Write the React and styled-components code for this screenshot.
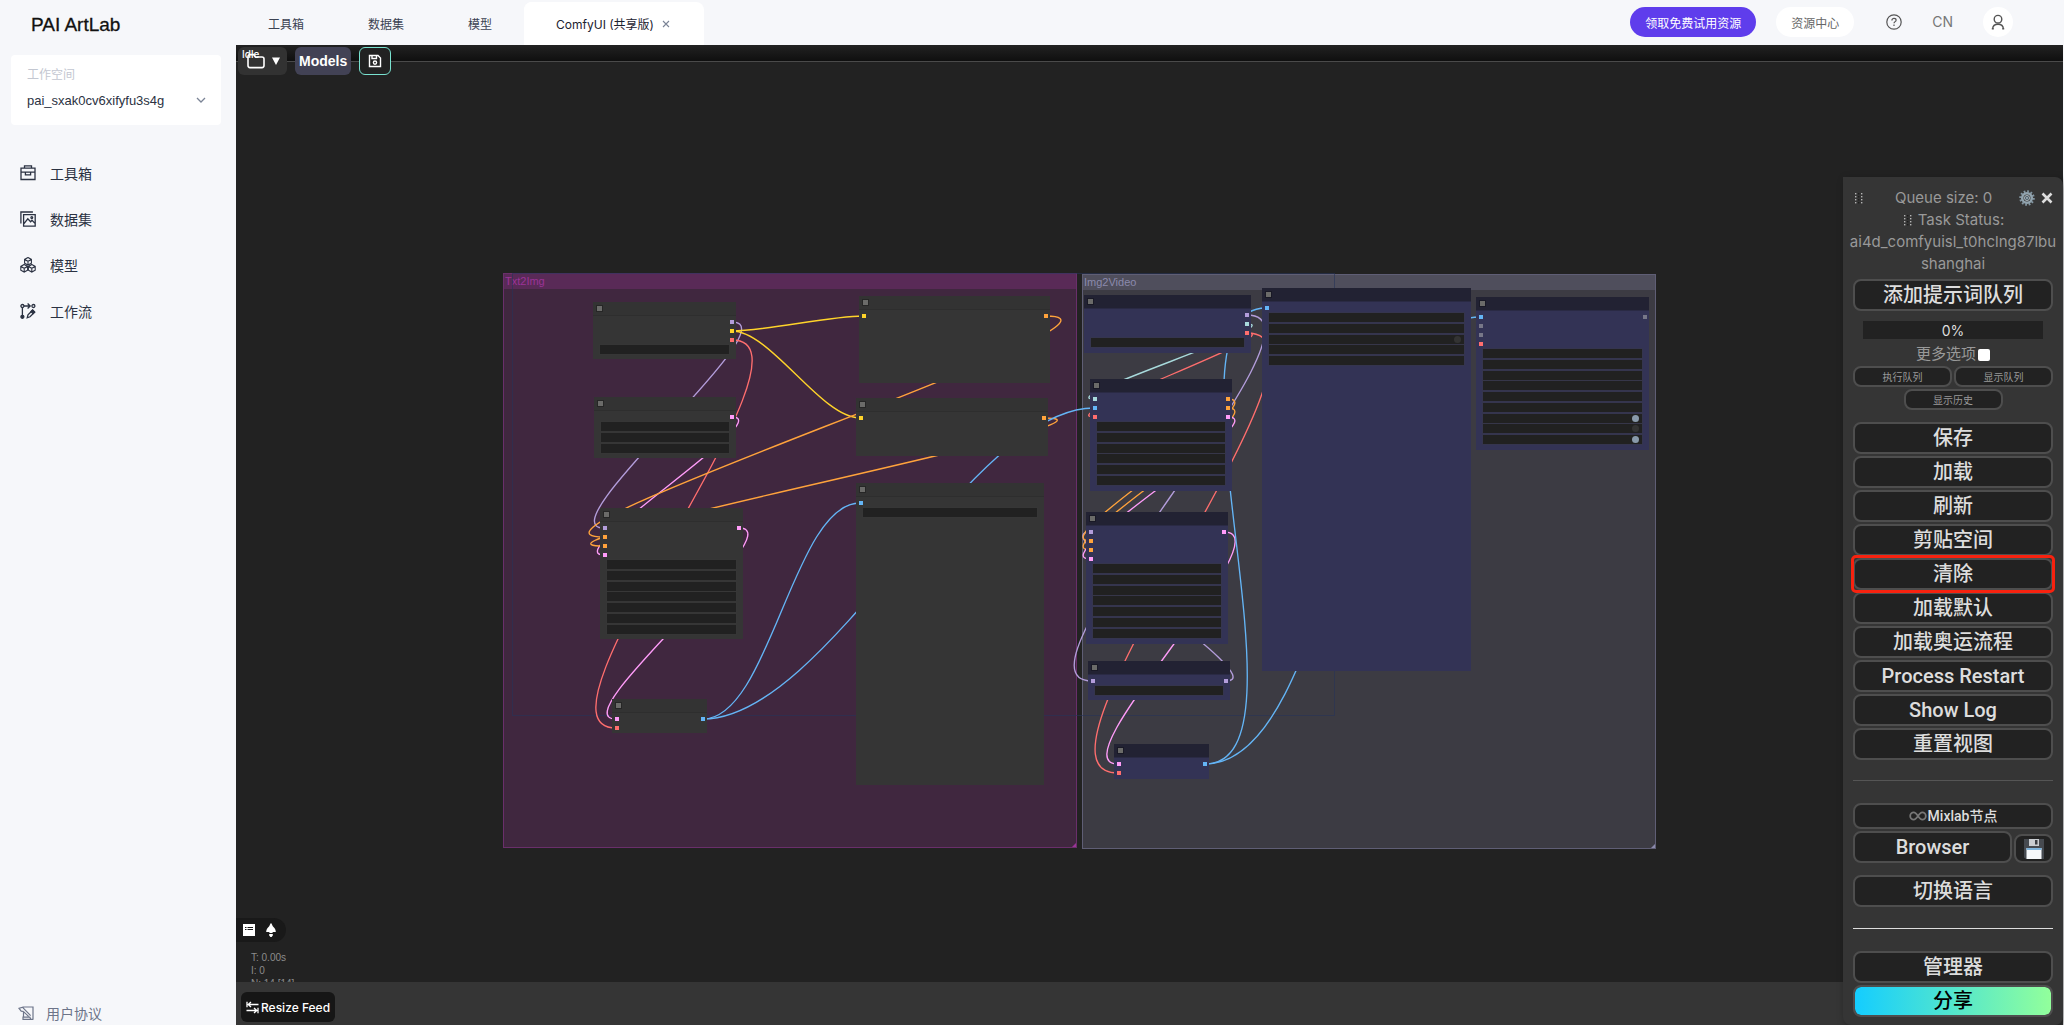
import React from 'react';
import styled, { createGlobalStyle, css } from 'styled-components';

const sans = '"Liberation Sans", "Noto Sans CJK SC", sans-serif';
const ui = 'Inter, "Noto Sans CJK SC", sans-serif';
const menuFont = 'Roboto, "Noto Sans CJK SC", sans-serif';

const GlobalStyle = createGlobalStyle`
  * { box-sizing: border-box; }
  body { margin: 0; background: #f6f8fa; font-family: ${ui}; }
  button, input, select { font-family: inherit; }
  button { cursor: pointer; }
  a { color: inherit; text-decoration: none; }
`;

/* ---------- page shell ---------- */

const Page = styled.div`
  display: grid;
  grid-template-columns: 236px minmax(0, 1fr);
  height: 100vh;
  overflow: hidden;
  background: #f6f7fa;
`;

const Sidebar = styled.aside`
  display: flex;
  flex-direction: column;
  padding: 0 15px 0 11px;
  color: #2b3242;
`;

const Logo = styled.a`
  padding-left: 20px;
  height: 55px;
  line-height: 50px;
  font-size: 19px;
  font-weight: 500;
  font-family: ${sans};
  color: #111;
  -webkit-text-stroke: 0.3px #111;
`;

const WorkspaceCard = styled.div`
  height: 70px;
  padding: 11px 15px 0 16px;
  border-radius: 4px;
  background: #fff;
`;

const WorkspaceLabel = styled.label`
  display: block;
  font-size: 12px;
  line-height: 18px;
  color: #c3c7d1;
`;

const SelectRow = styled.div`
  display: flex;
  align-items: center;
  margin-top: 5px;
  height: 22px;
`;

const WorkspaceSelect = styled.select`
  flex: 1;
  min-width: 0;
  padding: 0;
  border: 0;
  appearance: none;
  background: none;
  font-size: 13px;
  font-family: ${sans};
  color: #2b3242;
`;

const Nav = styled.nav`
  display: flex;
  flex-direction: column;
  margin-top: 25px;
`;

const NavLink = styled.a`
  display: flex;
  align-items: center;
  gap: 14px;
  height: 46px;
  padding-left: 9px;
  font-size: 14px;
`;

const Agreement = styled(NavLink)`
  margin-top: auto;
  height: 24px;
  padding-left: 7px;
  gap: 12px;
  color: #6c7489;
`;

const Main = styled.main`
  display: flex;
  flex-direction: column;
  min-width: 0;
  padding-right: 1px;
`;

/* ---------- header ---------- */

const Header = styled.header`
  display: flex;
  align-items: flex-end;
  justify-content: space-between;
  height: 45px;
  flex: none;
`;

const Tabs = styled.nav`
  display: flex;
`;

const Tab = styled.a`
  display: flex;
  align-items: center;
  gap: 10px;
  height: 43px;
  padding: 0 32px;
  font-size: 12px;
  color: ${p => (p.$active ? '#1c2230' : '#3b4252')};
  background: ${p => (p.$active ? '#fff' : 'transparent')};
  border-radius: 8px 8px 0 0;
`;

const TabGroup = styled.div`
  display: flex;
  align-items: center;
  background: #fff;
  border-radius: 8px 8px 0 0;
  padding-right: 34px;
  ${Tab} { padding-right: 8px; }
`;

const CloseTab = styled.button`
  display: flex;
  padding: 0;
  border: 0;
  background: none;
  color: #7b8496;
`;

const Actions = styled.div`
  display: flex;
  align-items: center;
  padding: 0 50px 8px 0;
`;

const Pill = styled.button`
  height: 30px;
  padding: 0 15px;
  border: 0;
  border-radius: 15px;
  font-size: 12px;
  margin-right: ${p => (p.$primary ? '20px' : '32px')};
  color: ${p => (p.$primary ? '#fff' : '#666')};
  background: ${p => (p.$primary ? '#5f3dec' : '#fff')};
`;

const PlainAction = styled.button`
  display: flex;
  padding: 0;
  margin-right: 30px;
  border: 0;
  background: none;
  font-size: 14px;
  line-height: 18px;
  color: #777;
`;

const Avatar = styled.button`
  display: grid;
  place-items: center;
  width: 30px;
  height: 30px;
  padding: 0;
  border: 0;
  border-radius: 50%;
  background: #fff;
  color: #555;
`;

/* ---------- stage ---------- */

const Stage = styled.div`
  position: relative;
  display: flex;
  flex-direction: column;
  flex: 1;
  min-height: 0;
  background: #222;
`;

const Canvas = styled.section`
  position: relative;
  flex: 1;
  overflow: hidden;
`;

const StatusBar = styled.div`
  position: absolute;
  inset: 0 0 auto 0;
  height: 17px;
  background: linear-gradient(#222, #0f0f0f);
  border-bottom: 1px solid #4a4a4a;
`;

const StatusText = styled.span`
  position: absolute;
  z-index: 2;
  left: 6px;
  top: 2px;
  font: 500 10px/14px ${ui};
  color: #fff;
`;

const Toolbar = styled.div`
  position: absolute;
  left: 2px;
  top: 2px;
  display: flex;
  gap: 8px;
`;

const toolPadding = { folder: '0 6px 0 8px', models: '0 3px', save: '0' };
const toolColor = { folder: '#323232', models: '#424255', save: '#222' };

const ToolButton = styled.button`
  display: flex;
  align-items: center;
  justify-content: center;
  gap: 7px;
  min-width: 32px;
  height: 28px;
  padding: ${p => toolPadding[p.$kind]};
  border: 1px solid ${p => (p.$kind === 'save' ? '#79e2d0' : 'transparent')};
  border-radius: 6px;
  background: ${p => toolColor[p.$kind]};
  color: #fff;
  font: bold 14px ${sans};
`;

const QuickPill = styled.div`
  position: absolute;
  left: 0;
  bottom: 40px;
  display: flex;
  align-items: center;
  gap: 9px;
  width: 50px;
  height: 24px;
  padding-left: 7px;
  border-radius: 0 12px 12px 0;
  background: #191919;
`;

const QuickButton = styled.button`
  display: flex;
  padding: 0;
  border: 0;
  background: none;
  color: #fff;
`;

const Stats = styled.div`
  position: absolute;
  left: 15px;
  bottom: -8px;
  font: 10px/13px ${sans};
  color: #8c8c8c;
`;

const Feed = styled.footer`
  flex: none;
  height: 43px;
  padding: 10px 5px 3px;
  background: #353535;
`;

const FeedButton = styled.button`
  display: flex;
  align-items: center;
  gap: 2px;
  height: 30px;
  padding: 0 5px;
  border: 0;
  border-radius: 6px;
  background: #161616;
  color: #fff;
  font: 500 12px ${ui};
`;

/* ---------- node graph ---------- */

const Group = styled.div`
  position: absolute;
  left: ${p => p.$x}px;
  top: ${p => p.$y}px;
  width: 574px;
  height: 575px;
  border: 1px solid ${p => p.$tone.edge};
  background: ${p => p.$tone.body};
  &::after {
    content: '';
    position: absolute;
    right: 0;
    bottom: 0;
    border: 2px solid ${p => p.$tone.text};
    border-top-color: transparent;
    border-left-color: transparent;
  }
`;

const GroupTitle = styled.h2`
  margin: 0;
  padding-left: 1px;
  height: 15px;
  font: 11px/15px ${sans};
  background: ${p => p.$tone.title};
  color: ${p => p.$tone.text};
`;

const Extent = styled.div`
  position: absolute;
  left: 276px;
  top: 228px;
  width: 823px;
  height: 443px;
  border: 1px solid rgba(38, 52, 88, 0.6);
`;

const Wires = styled.svg`
  position: absolute;
  left: 0;
  top: 0;
  width: 100%;
  height: 100%;
  fill: none;
  stroke-width: 1.35;
`;

const NodeBox = styled.article`
  position: absolute;
  left: ${p => p.$x}px;
  top: ${p => p.$y}px;
  width: ${p => p.$w}px;
  height: ${p => p.$h}px;
  background: ${p => (p.$blue ? '#333355' : '#353535')};
`;

const NodeTitle = styled.header`
  display: flex;
  align-items: center;
  height: 14px;
  padding-left: 4px;
  background: ${p => (p.$blue ? '#222233' : '#333')};
  border-bottom: 1px solid ${p => (p.$blue ? '#2a2a44' : '#2e2e2e')};
`;

const CollapseMark = styled.i`
  width: 5px;
  height: 5px;
  background: #6b6b69;
  outline: 1px solid rgba(0, 0, 0, 0.25);
`;

const Slots = styled.div`
  display: flex;
  justify-content: space-between;
  padding: 1px 2px;
`;

const SlotColumn = styled.div`
  display: flex;
  flex-direction: column;
`;

const Slot = styled.i`
  display: grid;
  place-items: center;
  width: 5px;
  height: 9px;
  &::before {
    content: '';
    width: 4px;
    height: 4px;
    background: ${p => p.$color};
  }
`;

const Widgets = styled.div`
  display: flex;
  flex-direction: column;
  justify-content: space-between;
  height: ${p => p.$h}px;
  margin: 0 7px;
`;

const Widget = styled.div`
  display: flex;
  align-items: center;
  justify-content: flex-end;
  height: 9px;
  padding-right: 3px;
  background: #212121;
  outline: 1px solid rgba(60, 60, 60, 0.25);
`;

const Toggle = styled.i`
  width: 7px;
  height: 7px;
  border-radius: 50%;
  background: ${p => (p.$on ? '#8899aa' : '#333')};
`;

const C = {
  model: '#b39ddb', clip: '#ffd42a', vae: '#ff6e6e', latent: '#ff9cf9',
  cond: '#ffa33c', image: '#64b5f6', vision: '#a8dadc', any: '#777788',
};

const purple = { edge: '#6a2f6b', body: '#40273f', title: '#592a57', text: '#9b3397' };
const slate = { edge: '#5f5e75', body: '#3c3b43', title: '#4f4e5c', text: '#8b8aac' };

const nodes = {
  checkpoint: { x: 357, y: 257, w: 143, h: 57, ins: [], outs: ['model', 'clip', 'vae'], widgets: 1 },
  empty: { x: 358, y: 352, w: 142, h: 61, ins: [], outs: ['latent'], widgets: 3 },
  sampler: { x: 364, y: 463, w: 143, h: 131, ins: ['model', 'cond', 'cond', 'latent'], outs: ['latent'], widgets: 7 },
  positive: { x: 623, y: 251, w: 191, h: 87, ins: ['clip'], outs: ['cond'], widgets: 0 },
  negative: { x: 620, y: 353, w: 192, h: 58, ins: ['clip'], outs: ['cond'], widgets: 0 },
  save: { x: 620, y: 438, w: 188, h: 302, ins: ['image'], outs: [], widgets: 1 },
  decode: { x: 376, y: 654, w: 95, h: 34, ins: ['latent', 'vae'], outs: ['image'], widgets: 0 },
  vCheckpoint: { blue: true, x: 848, y: 250, w: 167, h: 58, ins: [], outs: ['model', 'vision', 'vae'], widgets: 1 },
  vCondition: { blue: true, x: 854, y: 334, w: 142, h: 112, ins: ['vision', 'image', 'vae'], outs: ['cond', 'cond', 'latent'], widgets: 6 },
  vSampler: { blue: true, x: 850, y: 467, w: 142, h: 132, ins: ['model', 'cond', 'cond', 'latent'], outs: ['latent'], widgets: 7 },
  vGuidance: { blue: true, x: 852, y: 616, w: 142, h: 39, ins: ['model'], outs: ['model'], widgets: 1 },
  vDecode: { blue: true, x: 878, y: 699, w: 95, h: 35, ins: ['latent', 'vae'], outs: ['image'], widgets: 0 },
  combine: { blue: true, x: 1026, y: 243, w: 209, h: 383, ins: ['image'], outs: [], widgets: 5, toggles: { 2: false } },
  output: { blue: true, x: 1240, y: 252, w: 173, h: 153, ins: ['image', 'any', 'any', 'vae'], outs: ['any'], widgets: 9, toggles: { 6: true, 7: false, 8: true } },
};

const links = [
  ['checkpoint', 0, 'sampler', 0], ['checkpoint', 1, 'positive', 0], ['checkpoint', 1, 'negative', 0],
  ['checkpoint', 2, 'decode', 1], ['empty', 0, 'sampler', 3], ['positive', 0, 'sampler', 1],
  ['negative', 0, 'sampler', 2], ['sampler', 0, 'decode', 0], ['decode', 0, 'save', 0],
  ['decode', 0, 'vCondition', 1], ['vCheckpoint', 0, 'vGuidance', 0], ['vGuidance', 0, 'vSampler', 0],
  ['vCheckpoint', 1, 'vCondition', 0], ['vCheckpoint', 2, 'vCondition', 2], ['vCheckpoint', 2, 'vDecode', 1],
  ['vCondition', 0, 'vSampler', 1], ['vCondition', 1, 'vSampler', 2], ['vCondition', 2, 'vSampler', 3],
  ['vSampler', 0, 'vDecode', 0], ['vDecode', 0, 'combine', 0], ['vDecode', 0, 'output', 0],
];

/* Cubic from an output slot to an input slot, handles pulled sideways by a quarter of the distance. */
function wirePath([from, out, to, input]) {
  const a = nodes[from];
  const b = nodes[to];
  const x1 = a.x + a.w - 4;
  const y1 = a.y + 20 + out * 9;
  const x2 = b.x + 4;
  const y2 = b.y + 20 + input * 9;
  const pull = Math.hypot(x2 - x1, y2 - y1) / 4;
  return `M${x1} ${y1}C${x1 + pull} ${y1} ${x2 - pull} ${y2} ${x2} ${y2}`;
}

function GraphNode({ node }) {
  const { blue, x, y, w, h, ins, outs, widgets, toggles = {} } = node;
  return (
    <NodeBox $x={x} $y={y} $w={w} $h={h} $blue={blue}>
      <NodeTitle $blue={blue}><CollapseMark /></NodeTitle>
      <Slots>
        <SlotColumn>{ins.map((t, i) => <Slot key={i} $color={C[t]} />)}</SlotColumn>
        <SlotColumn>{outs.map((t, i) => <Slot key={i} $color={C[t]} />)}</SlotColumn>
      </Slots>
      {widgets > 0 && (
        <Widgets $h={Math.round(9 + (widgets - 1) * 10.8)}>
          {Array.from({ length: widgets }, (_, i) => (
            <Widget key={i}>{i in toggles && <Toggle $on={toggles[i]} />}</Widget>
          ))}
        </Widgets>
      )}
    </NodeBox>
  );
}

/* ---------- floating menu ---------- */

const Menu = styled.aside`
  position: absolute;
  right: 0;
  bottom: 0;
  display: flex;
  flex-direction: column;
  width: 220px;
  padding: 10px 10px 8px;
  border-radius: 0 8px 8px 8px;
  background: #353535;
  box-shadow: 3px 3px 8px rgba(0, 0, 0, 0.4);
  color: #999;
  font: 15px/22px ${ui};
`;

const MenuHead = styled.div`
  display: grid;
  grid-template-columns: 42px 1fr 44px;
  align-items: center;
  height: 22px;
  white-space: nowrap;
`;

const HeadButtons = styled.div`
  display: flex;
  align-items: center;
  justify-content: flex-end;
  gap: 6px;
`;

const BareButton = styled.button`
  display: flex;
  padding: 0;
  border: 0;
  background: none;
  color: #ddd;
`;

const TaskStatus = styled.div`
  display: flex;
  flex-direction: column;
  align-items: center;
  margin-bottom: 4px;
  white-space: nowrap;
`;

const TaskLine = styled.span`
  display: flex;
  align-items: center;
  gap: 4px;
`;

const Progress = styled.div`
  margin: 10px 10px 4px;
  height: 18px;
  background: #222;
  color: #ddd;
  font: 14px/19px ${ui};
  text-align: center;
`;

const MoreOptions = styled.label`
  display: flex;
  align-items: center;
  justify-content: center;
  gap: 2px;
  height: 22px;
  margin-bottom: 1px;
`;

const Check = styled.input`
  appearance: none;
  width: 12px;
  height: 12px;
  margin: 2px 0 0;
  border-radius: 2px;
  background: #fff;
`;

const SmallRow = styled.div`
  display: flex;
  flex-wrap: wrap;
  justify-content: center;
  gap: 2px;
  margin-bottom: 12px;
`;

const buttonBase = css`
  border: 2px solid #4e4e4e;
  border-radius: 8px;
  background: #222;
  padding: 0;
`;

const SmallButton = styled.button`
  ${buttonBase}
  width: 99px;
  height: 21px;
  font-size: 10px;
  line-height: 16px;
  color: #999;
`;

const ButtonList = styled.div`
  display: flex;
  flex-direction: column;
  gap: 2px;
`;

const MenuButton = styled.button`
  ${buttonBase}
  position: relative;
  flex: ${p => (p.$grow ? '1' : 'none')};
  height: 32px;
  font: 500 20px/28px ${menuFont};
  color: #ddd;
  ${p => p.$share && css`
    color: #000;
    background: linear-gradient(90deg, #14cdff, #92ff9b) padding-box;
  `}
  ${p => p.$marked && css`
    z-index: 1;
    &::after {
      content: '';
      position: absolute;
      inset: -5px -4px -5px -4px;
      border: 3px solid #f8220f;
      border-radius: 5px;
    }
  `}
`;

const MixlabButton = styled.button`
  ${buttonBase}
  display: flex;
  align-items: center;
  justify-content: center;
  gap: 1px;
  height: 26px;
  font: 500 14px/22px ${menuFont};
  color: #ddd;
`;

const SplitRow = styled.div`
  display: flex;
  align-items: flex-end;
  gap: 2px;
  margin-bottom: 10px;
`;

const IconButton = styled.button`
  ${buttonBase}
  display: grid;
  place-items: center;
  width: 39px;
  height: 29px;
`;

const Divider = styled.hr`
  width: 100%;
  height: 1px;
  margin: ${p => (p.$light ? '21px 0 22px' : '20px 0 22px')};
  border: 0;
  background: ${p => (p.$light ? '#ddd' : '#555')};
`;

/* ---------- icons ---------- */

const Icon = ({ size = 16, box = 16, children, ...rest }) => (
  <svg width={size} height={size} viewBox={`0 0 ${box} ${box}`} fill="none" stroke="currentColor" strokeWidth="1.3" aria-hidden="true" {...rest}>
    {children}
  </svg>
);

const ToolboxIcon = () => (
  <Icon><path d="M1 3.2h14v11.3H1zM4.5 3V.9h7V3M1 7.2h14M5.4 7.2v2.6h5.2V7.2" /></Icon>
);
const DatasetIcon = () => (
  <Icon><path d="M.9 12.5V1h12M3.6 3.6h11.6v11.5H3.6zM4 12.6l3.8-4.8 2.8 3 1.4-1.6 3 3.2" /><circle cx="11.8" cy="6.6" r=".9" /></Icon>
);
const CubesIcon = () => (
  <Icon strokeWidth="1.1">
    {[[8, 4.3], [4.2, 11.3], [11.8, 11.3]].map(([x, y]) => (
      <path key={x} transform={`translate(${x} ${y})`} d="M0-3.8 3.4-1.9V1.9L0 3.8-3.4 1.9V-1.9zM-3.4-1.9 0 0 3.4-1.9M0 0V3.8" />
    ))}
  </Icon>
);
const FlowIcon = () => (
  <Icon>
    <circle cx="2.4" cy="3" r="1.5" /><circle cx="13.4" cy="3" r="1.5" /><circle cx="2.4" cy="13.8" r="1.5" fill="currentColor" />
    <path d="M2.4 4.5v8M4 3h6M7.6.6 10.2 3 7.6 5.4M7.2 14.8l.8-3 4.6-4.6 2 2-4.6 4.6z" /><path d="M11 8.6l2 2 1.6-1.6-2-2z" fill="currentColor" />
  </Icon>
);
const AgreementIcon = () => (
  <Icon strokeWidth="1.2"><path d="M4.5 2H15v12.2M4.5 2.2 1 3.4l2.2 2.8 2 .2M5.2 6.4l5.4 5M4.6 2.4l8 8.2M5 14.3v-2.2h6.8l1 2.2zM5.5 12V6.5M15.4 14.3H4.6" /></Icon>
);
const ChevronIcon = () => (
  <Icon size={10} box={10} stroke="#7b8496"><path d="m1 3 4 4 4-4" /></Icon>
);
const CloseIcon = () => <Icon size={8} box={8} strokeWidth="1.1"><path d="m1 1 6 6M7 1 1 7" /></Icon>;
const HelpIcon = () => (
  <Icon strokeWidth="1.2" color="#555"><circle cx="8" cy="8" r="7.2" /><path d="M5.900 6.400c0-1.300 1-2 2.100-2s2.100.7 2.100 1.800c0 1.400-2.100 1.500-2.100 3.100M8 10.600v1.300" /></Icon>
);
const UserIcon = () => (
  <Icon strokeWidth="1.4"><circle cx="8" cy="5.2" r="3.8" /><path d="M2.6 15c.2-3 2.2-4.7 5.4-4.7s5.2 1.7 5.4 4.7M1.8 14.8h2M12.2 14.8h2" /></Icon>
);
const FolderIcon = () => (
  <Icon size={18} box={18} strokeWidth="1.6"><path d="M1 4.6a2 2 0 0 1 2-2h3.6l2 2.400H15a2 2 0 0 1 2 2v6.600a2 2 0 0 1-2 2H3a2 2 0 0 1-2-2z" /></Icon>
);
const DropIcon = () => <Icon size={8} box={8} stroke="none" fill="currentColor"><path d="M0 .5h8L4 8z" /></Icon>;
const SaveIcon = () => (
  <Icon size={14} box={14} strokeWidth="1.4"><path d="M1.5 1.5H10L12.500 4v8.500h-11zM4 1.500v3h4.500v-3" /><circle cx="7" cy="8.6" r="1.6" /></Icon>
);
const ListIcon = () => (
  <Icon size={12} box={12} stroke="none"><path fill="#fff" d="M0 0h12v12H0z" /><path stroke="#191919" strokeWidth="1" d="M2 3.500h1.500M4.500 3.500H10M2 5.500h1.500M4.500 5.500H10" /></Icon>
);
const BellIcon = () => (
  <Icon size={14} box={14} stroke="none" fill="currentColor"><path d="M7 0c1 1.200 1 2 2 3.400 1.800 1.600 2.800 3.400 2.800 5.600H8.600v1H5.400V9H2.200c0-2.200 1-4 2.800-5.600C6 2 6 1.200 7 0zM5.200 11h3.600v1.400L7.600 14H6.400l-1.200-1.600z" /></Icon>
);
const ResizeIcon = () => (
  <Icon size={13} box={13}><path d="M1 .8v5.400M2 3.500h10.500M5 1 2.200 3.500 5 6M12 6.800v5.400M.5 9.500H11M8 7l2.800 2.500L8 12" /></Icon>
);
const GripIcon = () => (
  <Icon size={12} box={12} stroke="none">
    {[2, 5, 8].map((x, i) => [1, 4, 7, 10].map(y => (
      <rect key={`${x}-${y}`} x={x} y={y} width="1.4" height="1.4" fill={i === 1 ? '#1d1d1d' : '#b5b5b5'} />
    )))}
  </Icon>
);
const GearIcon = () => (
  <Icon box={20} size={16}>
    <circle cx="10" cy="10" r="8.3" stroke="#8497a3" strokeWidth="2.8" strokeDasharray="2.17 2.17" />
    <circle cx="10" cy="10" r="6" stroke="#91a3ae" strokeWidth="3.2" />
    <circle cx="10" cy="10" r="3.2" fill="#4a5c68" stroke="#c3cdd3" strokeWidth="1" />
    <circle cx="10" cy="10" r="1.2" fill="#a9b6be" stroke="none" />
  </Icon>
);
const CrossIcon = () => <Icon size={12} box={12} strokeWidth="2.6"><path d="m1.500 1.500 9 9M10.500 1.500l-9 9" /></Icon>;
const InfinityIcon = () => (
  <Icon size={18} box={18} color="#777" strokeWidth="1.8"><path d="M9 9C7.200 6.500 6.200 5.400 4.800 5.400a3.600 3.600 0 0 0 0 7.200C6.200 12.600 7.200 11.500 9 9s2.800-3.600 4.200-3.600a3.600 3.600 0 0 1 0 7.200C11.800 12.600 10.800 11.500 9 9z" /></Icon>
);
const FloppyIcon = () => (
  <Icon size={22} box={22} stroke="none">
    <path fill="#464a50" d="M1 1h20v20H3l-2-1.500z" />
    <path fill="#c9ccd0" d="M6 1h10v7H6z" /><path fill="#3a3d42" d="M12 2h2.500v4.500H12z" />
    <path fill="#f6f8fa" d="M3.500 10h15v11h-15z" /><path fill="#7fb4dc" d="M3.500 10h15v2h-15z" />
  </Icon>
);

/* ---------- app ---------- */

const navItems = [['工具箱', ToolboxIcon], ['数据集', DatasetIcon], ['模型', CubesIcon], ['工作流', FlowIcon]];
const menuItems = ['保存', '加载', '刷新', '剪贴空间', '清除', '加载默认', '加载奥运流程', 'Process Restart', 'Show Log', '重置视图'];

export default function App() {
  return (
    <Page>
      <GlobalStyle />
      <Sidebar>
        <Logo href="#home">PAI ArtLab</Logo>
        <WorkspaceCard>
          <WorkspaceLabel htmlFor="workspace">工作空间</WorkspaceLabel>
          <SelectRow>
            <WorkspaceSelect id="workspace"><option>pai_sxak0cv6xifyfu3s4g</option></WorkspaceSelect>
            <ChevronIcon />
          </SelectRow>
        </WorkspaceCard>
        <Nav>
          {navItems.map(([label, Glyph]) => (
            <NavLink href="#nav" key={label}><Glyph />{label}</NavLink>
          ))}
        </Nav>
        <Agreement href="#agreement"><AgreementIcon />用户协议</Agreement>
      </Sidebar>

      <Main>
        <Header>
          <Tabs>
            <Tab href="#tools">工具箱</Tab>
            <Tab href="#data">数据集</Tab>
            <Tab href="#models">模型</Tab>
            <TabGroup>
              <Tab href="#comfy" $active>ComfyUI (共享版)</Tab>
              <CloseTab aria-label="关闭"><CloseIcon /></CloseTab>
            </TabGroup>
          </Tabs>
          <Actions>
            <Pill $primary>领取免费试用资源</Pill>
            <Pill>资源中心</Pill>
            <PlainAction aria-label="帮助"><HelpIcon /></PlainAction>
            <PlainAction>CN</PlainAction>
            <Avatar aria-label="账户"><UserIcon /></Avatar>
          </Actions>
        </Header>

        <Stage>
          <Canvas>
            <Group $x={267} $y={228} $tone={purple}><GroupTitle $tone={purple}>Txt2Img</GroupTitle></Group>
            <Group $x={846} $y={229} $tone={slate}><GroupTitle $tone={slate}>Img2Video</GroupTitle></Group>
            <Extent />
            <Wires>
              {links.map((link, i) => (
                <path key={i} d={wirePath(link)} stroke={C[nodes[link[0]].outs[link[1]]]} />
              ))}
            </Wires>
            {Object.entries(nodes).map(([id, node]) => <GraphNode key={id} node={node} />)}

            <StatusBar />
            <StatusText>Idle</StatusText>
            <Toolbar>
              <ToolButton $kind="folder" aria-label="打开"><FolderIcon /><DropIcon /></ToolButton>
              <ToolButton $kind="models">Models</ToolButton>
              <ToolButton $kind="save" aria-label="保存"><SaveIcon /></ToolButton>
            </Toolbar>

            <QuickPill>
              <QuickButton aria-label="列表"><ListIcon /></QuickButton>
              <QuickButton aria-label="通知"><BellIcon /></QuickButton>
            </QuickPill>
            <Stats>
              <div>T: 0.00s</div>
              <div>I: 0</div>
              <div>N: 14 [14]</div>
            </Stats>
          </Canvas>
          <Feed><FeedButton><ResizeIcon />Resize Feed</FeedButton></Feed>

          <Menu>
            <MenuHead>
              <GripIcon />
              <span>Queue size: 0</span>
              <HeadButtons>
                <BareButton aria-label="设置"><GearIcon /></BareButton>
                <BareButton aria-label="关闭"><CrossIcon /></BareButton>
              </HeadButtons>
            </MenuHead>
            <TaskStatus>
              <TaskLine><GripIcon />Task Status:</TaskLine>
              <TaskLine>ai4d_comfyuisl_t0hclng87lbu</TaskLine>
              <TaskLine>shanghai</TaskLine>
            </TaskStatus>
            <MenuButton>添加提示词队列</MenuButton>
            <Progress role="progressbar" aria-valuenow={0}>0%</Progress>
            <MoreOptions>更多选项<Check type="checkbox" /></MoreOptions>
            <SmallRow>
              <SmallButton>执行队列</SmallButton>
              <SmallButton>显示队列</SmallButton>
              <SmallButton>显示历史</SmallButton>
            </SmallRow>
            <ButtonList>
              {menuItems.map(label => (
                <MenuButton key={label} $marked={label === '清除'}>{label}</MenuButton>
              ))}
            </ButtonList>
            <Divider />
            <ButtonList>
              <MixlabButton><InfinityIcon />Mixlab节点</MixlabButton>
              <SplitRow>
                <MenuButton $grow>Browser</MenuButton>
                <IconButton aria-label="保存工作流"><FloppyIcon /></IconButton>
              </SplitRow>
              <MenuButton>切换语言</MenuButton>
            </ButtonList>
            <Divider $light />
            <ButtonList>
              <MenuButton>管理器</MenuButton>
              <MenuButton $share>分享</MenuButton>
            </ButtonList>
          </Menu>
        </Stage>
      </Main>
    </Page>
  );
}
